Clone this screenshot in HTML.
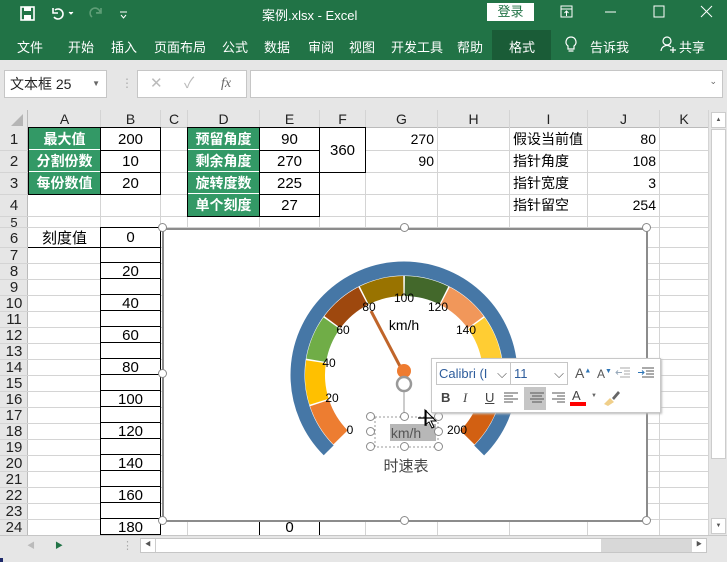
<!DOCTYPE html>
<html><head><meta charset="utf-8">
<style>
*{margin:0;padding:0;box-sizing:border-box}
body{width:727px;height:562px;overflow:hidden;background:#e6e6e6;font-family:"Liberation Sans","Noto Sans CJK SC",sans-serif;position:relative}
.a{position:absolute}
.t{color:#fff;font-size:13px}
.v{position:absolute;width:1px;background:#d4d4d4}
.h{position:absolute;height:1px;background:#d4d4d4}
.c{position:absolute;display:flex;align-items:center;justify-content:center;font-size:15px;color:#000;white-space:nowrap}
.g{background:#339966;color:#fff;font-weight:bold;font-size:14px}
.r{justify-content:flex-end;padding-right:3px}
.l{justify-content:flex-start;padding-left:3px}
.rh{position:absolute;left:0;width:28px;font-size:15px;color:#222;text-align:center;line-height:16px}
.ch{position:absolute;top:110px;height:18px;font-size:14px;color:#222;text-align:center;line-height:18px}
.hd{position:absolute;width:9px;height:9px;border:1.5px solid #8a8a8a;border-radius:50%;background:#fff}
</style></head><body>
<div class="a" style="left:0;top:0;width:727px;height:60px;background:#217346"></div>
<svg class="a" style="left:20px;top:6px" width="110" height="16"><rect x="1" y="1" width="13" height="13" fill="none" stroke="#fff" stroke-width="1.6"/><rect x="4" y="1" width="7" height="4" fill="#fff"/><rect x="4" y="9" width="7" height="5" fill="#fff"/><path d="M35 4 a5 5 0 1 1 -1 7 M33 2 v5 h5" fill="none" stroke="#fff" stroke-width="1.6"/><path d="M49 6 l2 2 l2 -2" fill="#fff" stroke="#fff"/><path d="M72 11 a5 5 0 1 1 8 -5 M81 2 v5 h-5" fill="none" stroke="#5f9e77" stroke-width="1.6"/><path d="M76 6 l2 2 l2 -2" fill="#5f9e77"/><path d="M100 6 h7 M101 9 l2.5 3 l2.5 -3" stroke="#fff" fill="none"/></svg>
<div class="a t" style="left:262px;top:5px;font-size:13px">案例.xlsx  -  Excel</div>
<div class="a" style="left:487px;top:3px;width:47px;height:18px;background:#fff;color:#217346;font-size:13px;text-align:center;line-height:18px">登录</div>
<svg class="a" style="left:560px;top:5px" width="160" height="14"><rect x="1" y="1" width="11" height="11" fill="none" stroke="#fff"/><path d="M1 4h11M6.5 6v5M4.5 8l2-2 2 2" stroke="#fff" fill="none"/><path d="M45 7h11" stroke="#fff"/><rect x="94" y="1" width="10" height="11" fill="none" stroke="#fff"/><path d="M141 1l11 11M152 1l-11 11" stroke="#fff"/></svg>
<div class="a" style="left:492px;top:30px;width:59px;height:30px;background:#1a5c37"></div>
<div class="a t" style="top:37px;left:17px">文件</div>
<div class="a t" style="top:37px;left:68px">开始</div>
<div class="a t" style="top:37px;left:111px">插入</div>
<div class="a t" style="top:37px;left:154px">页面布局</div>
<div class="a t" style="top:37px;left:222px">公式</div>
<div class="a t" style="top:37px;left:264px">数据</div>
<div class="a t" style="top:37px;left:308px">审阅</div>
<div class="a t" style="top:37px;left:349px">视图</div>
<div class="a t" style="top:37px;left:391px">开发工具</div>
<div class="a t" style="top:37px;left:457px">帮助</div>
<div class="a t" style="top:37px;left:509px">格式</div>
<svg class="a" style="left:564px;top:36px" width="14" height="18"><path d="M7 1a5 5 0 0 0-3 9v3h6v-3a5 5 0 0 0-3-9zM4.5 15h5" fill="none" stroke="#fff" stroke-width="1.2"/></svg>
<div class="a t" style="top:37px;left:590px">告诉我</div>
<svg class="a" style="left:660px;top:36px" width="16" height="18"><circle cx="7" cy="5" r="4" fill="none" stroke="#fff" stroke-width="1.2"/><path d="M1 15a6 6 0 0 1 10-4M10 14h6M13 11v6" fill="none" stroke="#fff" stroke-width="1.2"/></svg>
<div class="a t" style="top:37px;left:679px">共享</div>
<div class="a" style="left:4px;top:70px;width:103px;height:28px;background:#fff;border:1px solid #c6c6c6;font-size:14px;line-height:26px;padding-left:5px;color:#222">文本框 25<span style="position:absolute;right:6px;font-size:8px;color:#666">▼</span></div>
<div class="a" style="left:121px;top:76px;color:#aaa;font-size:12px">⋮</div>
<div class="a" style="left:137px;top:70px;width:110px;height:28px;background:#fff;border:1px solid #c6c6c6;color:#bbb;font-size:15px;line-height:26px"><span style="position:absolute;left:12px">✕</span><span style="position:absolute;left:46px">✓</span><span style="position:absolute;left:83px;color:#666;font-family:'Liberation Serif';font-style:italic;font-size:14px">fx</span></div>
<div class="a" style="left:250px;top:70px;width:473px;height:28px;background:#fff;border:1px solid #c6c6c6"><span style="position:absolute;right:5px;top:5px;font-size:9px;color:#666">⌄</span></div>
<div class="a" style="left:0;top:110px;width:708px;height:425px;background:#fff"></div>
<div class="a" style="left:0;top:110px;width:708px;height:18px;background:#e6e6e6;border-bottom:1px solid #bbb"></div>
<div class="a" style="left:0;top:110px;width:28px;height:425px;background:#e6e6e6;border-right:1px solid #bbb"></div>
<svg class="a" style="left:8px;top:114px" width="16" height="12"><path d="M15 0v12H3z" fill="#b5b5b5"/></svg>
<div class="v" style="left:100px;top:110px;height:425px"></div><div class="v" style="left:160px;top:110px;height:425px"></div><div class="v" style="left:187px;top:110px;height:425px"></div><div class="v" style="left:259px;top:110px;height:425px"></div><div class="v" style="left:319px;top:110px;height:425px"></div><div class="v" style="left:365px;top:110px;height:425px"></div><div class="v" style="left:437px;top:110px;height:425px"></div><div class="v" style="left:509px;top:110px;height:425px"></div><div class="v" style="left:587px;top:110px;height:425px"></div><div class="v" style="left:659px;top:110px;height:425px"></div><div class="v" style="left:708px;top:110px;height:425px"></div>
<div class="h" style="left:0;top:150px;width:708px"></div><div class="h" style="left:0;top:172px;width:708px"></div><div class="h" style="left:0;top:194px;width:708px"></div><div class="h" style="left:0;top:216px;width:708px"></div><div class="h" style="left:0;top:227px;width:708px"></div><div class="h" style="left:0;top:247px;width:708px"></div>
<div class="h" style="left:0;top:263px;width:708px"></div><div class="h" style="left:0;top:279px;width:708px"></div><div class="h" style="left:0;top:295px;width:708px"></div><div class="h" style="left:0;top:311px;width:708px"></div><div class="h" style="left:0;top:327px;width:708px"></div><div class="h" style="left:0;top:343px;width:708px"></div><div class="h" style="left:0;top:359px;width:708px"></div><div class="h" style="left:0;top:375px;width:708px"></div><div class="h" style="left:0;top:391px;width:708px"></div><div class="h" style="left:0;top:407px;width:708px"></div><div class="h" style="left:0;top:423px;width:708px"></div><div class="h" style="left:0;top:439px;width:708px"></div><div class="h" style="left:0;top:455px;width:708px"></div><div class="h" style="left:0;top:471px;width:708px"></div><div class="h" style="left:0;top:487px;width:708px"></div><div class="h" style="left:0;top:503px;width:708px"></div><div class="h" style="left:0;top:519px;width:708px"></div>
<div class="ch" style="left:29px;width:71px">A</div><div class="ch" style="left:101px;width:59px">B</div><div class="ch" style="left:161px;width:26px">C</div><div class="ch" style="left:188px;width:71px">D</div><div class="ch" style="left:260px;width:59px">E</div><div class="ch" style="left:320px;width:45px">F</div><div class="ch" style="left:366px;width:71px">G</div><div class="ch" style="left:438px;width:71px">H</div><div class="ch" style="left:510px;width:77px">I</div><div class="ch" style="left:588px;width:71px">J</div><div class="ch" style="left:660px;width:48px">K</div>
<div class="rh" style="top:132px">1</div><div class="rh" style="top:154px">2</div><div class="rh" style="top:176px">3</div><div class="rh" style="top:198px">4</div><div class="rh" style="top:215px;font-size:13px">5</div><div class="rh" style="top:231px">6</div>
<div class="rh" style="top:248px">7</div><div class="rh" style="top:264px">8</div><div class="rh" style="top:280px">9</div><div class="rh" style="top:296px">10</div><div class="rh" style="top:312px">11</div><div class="rh" style="top:328px">12</div><div class="rh" style="top:344px">13</div><div class="rh" style="top:360px">14</div><div class="rh" style="top:376px">15</div><div class="rh" style="top:392px">16</div><div class="rh" style="top:408px">17</div><div class="rh" style="top:424px">18</div><div class="rh" style="top:440px">19</div><div class="rh" style="top:456px">20</div><div class="rh" style="top:472px">21</div><div class="rh" style="top:488px">22</div><div class="rh" style="top:504px">23</div><div class="rh" style="top:520px">24</div>
<div class="c g" style="left:29px;top:128px;width:71px;height:22px;border-bottom:1px solid #fff">最大值</div>
<div class="c g" style="left:29px;top:150px;width:71px;height:22px;border-bottom:1px solid #fff">分割份数</div>
<div class="c g" style="left:29px;top:172px;width:71px;height:22px">每份数值</div>
<div class="a" style="left:28px;top:127px;width:133px;height:68px;border:1px solid #000"></div>
<div class="a" style="left:100px;top:127px;width:1px;height:68px;background:#000"></div>
<div class="a" style="left:100px;top:150px;width:61px;height:1px;background:#000"></div><div class="a" style="left:100px;top:172px;width:61px;height:1px;background:#000"></div>
<div class="c" style="left:101px;top:128px;width:59px;height:22px">200</div>
<div class="c" style="left:101px;top:150px;width:59px;height:22px">10</div>
<div class="c" style="left:101px;top:172px;width:59px;height:22px">20</div>
<div class="c g" style="left:188px;top:128px;width:71px;height:22px;border-bottom:1px solid #fff">预留角度</div>
<div class="c g" style="left:188px;top:150px;width:71px;height:22px;border-bottom:1px solid #fff">剩余角度</div>
<div class="c g" style="left:188px;top:172px;width:71px;height:22px;border-bottom:1px solid #fff">旋转度数</div>
<div class="c g" style="left:188px;top:194px;width:71px;height:22px">单个刻度</div>
<div class="a" style="left:187px;top:127px;width:133px;height:90px;border:1px solid #000"></div>
<div class="a" style="left:259px;top:127px;width:1px;height:90px;background:#000"></div>
<div class="a" style="left:259px;top:150px;width:61px;height:1px;background:#000"></div><div class="a" style="left:259px;top:172px;width:61px;height:1px;background:#000"></div><div class="a" style="left:259px;top:194px;width:61px;height:1px;background:#000"></div>
<div class="c" style="left:260px;top:128px;width:59px;height:22px">90</div>
<div class="c" style="left:260px;top:150px;width:59px;height:22px">270</div>
<div class="c" style="left:260px;top:172px;width:59px;height:22px">225</div>
<div class="c" style="left:260px;top:194px;width:59px;height:22px">27</div>
<div class="c" style="left:319px;top:127px;width:47px;height:46px;border:1px solid #000;background:#fff">360</div>
<div class="c r" style="left:366px;top:128px;width:71px;height:22px;font-size:14px">270</div>
<div class="c r" style="left:366px;top:150px;width:71px;height:22px;font-size:14px">90</div>
<div class="c l" style="left:510px;top:128px;width:77px;height:22px;font-size:14px">假设当前值</div>
<div class="c l" style="left:510px;top:150px;width:77px;height:22px;font-size:14px">指针角度</div>
<div class="c l" style="left:510px;top:172px;width:77px;height:22px;font-size:14px">指针宽度</div>
<div class="c l" style="left:510px;top:194px;width:77px;height:22px;font-size:14px">指针留空</div>
<div class="c r" style="left:588px;top:128px;width:71px;height:22px;font-size:14px">80</div>
<div class="c r" style="left:588px;top:150px;width:71px;height:22px;font-size:14px">108</div>
<div class="c r" style="left:588px;top:172px;width:71px;height:22px;font-size:14px">3</div>
<div class="c r" style="left:588px;top:194px;width:71px;height:22px;font-size:14px">254</div>
<div class="c" style="left:29px;top:227px;width:71px;height:20px">刻度值</div>
<div class="a" style="left:28px;top:247px;width:72px;height:1px;background:#000"></div>
<div class="a" style="left:100px;top:227px;width:61px;height:308px;border-left:1px solid #000;border-right:1px solid #000;background:repeating-linear-gradient(#fff 0 15px,#000 15px 16px);background-position:0 4px"></div>
<div class="a" style="left:100px;top:227px;width:61px;height:21px;border:1px solid #000;background:#fff"></div>
<div class="c" style="left:101px;top:227px;width:59px;height:20px">0</div>
<div class="c" style="left:101px;top:263px;width:59px;height:16px">20</div>
<div class="c" style="left:101px;top:295px;width:59px;height:16px">40</div>
<div class="c" style="left:101px;top:327px;width:59px;height:16px">60</div>
<div class="c" style="left:101px;top:359px;width:59px;height:16px">80</div>
<div class="c" style="left:101px;top:391px;width:59px;height:16px">100</div>
<div class="c" style="left:101px;top:423px;width:59px;height:16px">120</div>
<div class="c" style="left:101px;top:455px;width:59px;height:16px">140</div>
<div class="c" style="left:101px;top:487px;width:59px;height:16px">160</div>
<div class="c" style="left:101px;top:519px;width:59px;height:16px;overflow:hidden;align-items:flex-start">180</div>
<div class="a" style="left:259px;top:521px;width:61px;height:14px;border-left:1px solid #000;border-right:1px solid #000"></div>
<div class="c" style="left:260px;top:519px;width:59px;height:16px;align-items:flex-start;overflow:hidden">0</div>
<div class="a" style="left:162px;top:228px;width:486px;height:294px;background:#fff;border:2px solid #8c8c8c"></div>
<svg class="a" style="left:0;top:0" width="727" height="562">
<g transform="translate(404,375)">
<circle r="106.5" fill="none" stroke="#4677a6" stroke-width="14" stroke-dasharray="501.9 1000" transform="rotate(135)"/>
<g fill="none" stroke-width="20">
<circle r="89" stroke="#ed7d31" stroke-dasharray="40.5 1000" transform="rotate(135.5)"/>
<circle r="89" stroke="#ffc000" stroke-dasharray="40.5 1000" transform="rotate(162.5)"/>
<circle r="89" stroke="#70ad47" stroke-dasharray="40.5 1000" transform="rotate(189.5)"/>
<circle r="89" stroke="#9e480e" stroke-dasharray="40.5 1000" transform="rotate(216.5)"/>
<circle r="89" stroke="#997300" stroke-dasharray="40.5 1000" transform="rotate(243.5)"/>
<circle r="89" stroke="#43682b" stroke-dasharray="40.5 1000" transform="rotate(270.5)"/>
<circle r="89" stroke="#f1975a" stroke-dasharray="40.5 1000" transform="rotate(297.5)"/>
<circle r="89" stroke="#ffcd33" stroke-dasharray="40.5 1000" transform="rotate(324.5)"/>
<circle r="89" stroke="#8cc168" stroke-dasharray="40.5 1000" transform="rotate(351.5)"/>
<circle r="89" stroke="#d26012" stroke-dasharray="40.5 1000" transform="rotate(378.5)"/>
</g>
<path d="M-33,-64 L-1,-3" stroke="#c0652a" stroke-width="3"/>
</g>
<g font-family="Liberation Sans" font-size="12" fill="#000" text-anchor="middle">
<text x="350" y="434">0</text><text x="332" y="402">20</text><text x="329" y="367">40</text><text x="343" y="334">60</text><text x="369" y="311">80</text><text x="404" y="302">100</text><text x="438" y="311">120</text><text x="466" y="334">140</text><text x="457" y="434">200</text>
<text x="404" y="330" font-size="14">km/h</text>
</g>
<circle cx="404" cy="371" r="7" fill="#ee7b30"/>
<circle cx="404" cy="384" r="7" fill="none" stroke="#999" stroke-width="2.5"/>
<path d="M404 392v25" stroke="#999"/>
<rect x="375" y="417" width="63" height="30" fill="none" stroke="#999" stroke-dasharray="2 2"/>
<rect x="390" y="424" width="46" height="17" fill="#b7b7b7"/>
<text x="406" y="438" font-family="Liberation Sans" font-size="14" fill="#555" text-anchor="middle">km/h</text>
<text x="406" y="471" font-family="Liberation Sans,Noto Sans CJK SC" font-size="15" fill="#444" text-anchor="middle">时速表</text>
<path d="M425 410l0 15 4-3 3 6 2-1-3-6 5 0z" fill="#fff" stroke="#000"/>
<path d="M418 418h16M426 410v16" stroke="#000" stroke-width="1.2"/>
</svg>
<div class="hd" style="left:158px;top:223px"></div><div class="hd" style="left:400px;top:223px"></div><div class="hd" style="left:642px;top:223px"></div>
<div class="hd" style="left:158px;top:369px"></div>
<div class="hd" style="left:158px;top:516px"></div><div class="hd" style="left:400px;top:516px"></div><div class="hd" style="left:642px;top:516px"></div>
<div class="hd" style="left:366px;top:412px"></div><div class="hd" style="left:400px;top:412px"></div><div class="hd" style="left:434px;top:412px"></div>
<div class="hd" style="left:366px;top:427px"></div><div class="hd" style="left:434px;top:427px"></div>
<div class="hd" style="left:366px;top:442px"></div><div class="hd" style="left:400px;top:442px"></div><div class="hd" style="left:434px;top:442px"></div>
<div class="a" style="left:431px;top:358px;width:230px;height:55px;background:#fff;border:1px solid #c8c8c8;box-shadow:1px 1px 2px #bbb"></div>
<div class="a" style="left:436px;top:362px;width:75px;height:23px;border:1px solid #c6c6c6;font-family:'Liberation Sans';font-size:13px;color:#2e5d9c;line-height:21px;padding-left:2px">Calibri (I<span style="position:absolute;right:3px;color:#555">⌵</span></div>
<div class="a" style="left:510px;top:362px;width:58px;height:23px;border:1px solid #c6c6c6;font-family:'Liberation Sans';font-size:13px;color:#2e5d9c;line-height:21px;padding-left:3px">11<span style="position:absolute;right:3px;color:#555">⌵</span></div>
<div class="a" style="left:575px;top:365px;font-size:14px;color:#555;font-family:'Liberation Sans'">A<sup style="font-size:7px;color:#2e75b6">▲</sup></div>
<div class="a" style="left:597px;top:367px;font-size:12px;color:#555;font-family:'Liberation Sans'">A<sup style="font-size:7px;color:#2e75b6">▼</sup></div>
<svg class="a" style="left:615px;top:366px" width="42" height="14"><path d="M5 2h10M9 5h6M9 8h6M5 11h10" stroke="#aaa"/><path d="M1 6.5h6M3 4.5l-2 2 2 2" stroke="#9ab" fill="none"/><path d="M27 2h12M31 5h8M31 8h8M27 11h12" stroke="#555"/><path d="M23 6.5h6M27 4.5l2 2-2 2" stroke="#2e75b6" fill="none"/></svg>
<div class="a" style="left:524px;top:387px;width:22px;height:23px;background:#c6c6c6"></div>
<div class="a" style="left:441px;top:390px;font-size:13px;font-weight:bold;color:#444;font-family:'Liberation Sans'">B</div>
<div class="a" style="left:463px;top:390px;font-size:13px;font-style:italic;color:#444;font-family:'Liberation Serif'">I</div>
<div class="a" style="left:485px;top:390px;font-size:13px;text-decoration:underline;color:#444;font-family:'Liberation Sans'">U</div>
<svg class="a" style="left:503px;top:392px" width="62" height="12"><path d="M1 1h14M1 4h9M1 7h14M1 10h9M27 1h14M29 4h10M27 7h14M29 10h10M49 1h14M54 4h9M49 7h14M54 10h9" stroke="#555"/></svg>
<div class="a" style="left:572px;top:388px;font-size:13px;color:#444;font-family:'Liberation Sans'">A</div>
<div class="a" style="left:570px;top:402px;width:16px;height:4px;background:#f00"></div>
<div class="a" style="left:591px;top:393px;font-size:6px;color:#666">▼</div>
<svg class="a" style="left:602px;top:389px" width="20" height="18"><path d="M2 15l6-6 4 4-6 4z" fill="#f0cf8a"/><path d="M10 9l6-7 2 2-6 7" fill="#666"/></svg>
<div class="a" style="left:709px;top:110px;width:18px;height:425px;background:#e6e6e6"></div>
<div class="a" style="left:711px;top:112px;width:15px;height:16px;background:#fff;border:1px solid #ccc;font-size:6px;text-align:center;line-height:14px;color:#555">▲</div>
<div class="a" style="left:711px;top:129px;width:15px;height:330px;background:#fff;border:1px solid #ccc"></div>
<div class="a" style="left:711px;top:518px;width:15px;height:16px;background:#fff;border:1px solid #ccc;font-size:6px;text-align:center;line-height:14px;color:#555">▼</div>
<div class="a" style="left:0;top:535px;width:727px;height:27px;background:#e6e6e6;border-top:1px solid #c6c6c6"></div>
<div class="a" style="left:27px;top:540px;font-size:8px;color:#bbb">◀</div>
<div class="a" style="left:55px;top:540px;font-size:8px;color:#217346">▶</div>
<div class="a" style="left:122px;top:539px;font-size:11px;color:#aaa">⋮</div>
<div class="a" style="left:140px;top:538px;width:567px;height:15px;background:#d8d8d8;border:1px solid #c6c6c6"></div>
<div class="a" style="left:141px;top:539px;width:14px;height:13px;background:#fff;font-size:6px;color:#555;line-height:13px;text-align:center">◀</div>
<div class="a" style="left:155px;top:539px;width:446px;height:13px;background:#fff;border-left:1px solid #ccc"></div>
<div class="a" style="left:692px;top:539px;width:14px;height:13px;background:#fff;font-size:6px;color:#555;line-height:13px;text-align:center">▶</div>
<div class="a" style="left:0;top:558px;width:3px;height:4px;background:#1e2a6a"></div>
</body></html>
